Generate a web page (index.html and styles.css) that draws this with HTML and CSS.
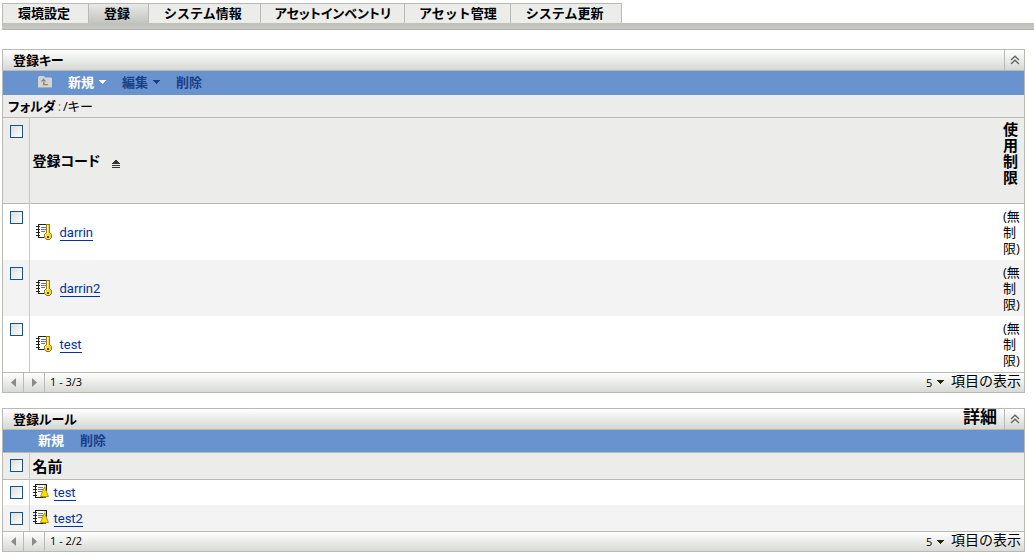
FILE: index.html
```
<!DOCTYPE html>
<html lang="ja">
<head>
<meta charset="utf-8">
<title>登録</title>
<link rel="stylesheet" href="styles.css">
</head>
<body>
<svg class="defs" aria-hidden="true">
  <symbol id="book" viewBox="0 0 16 16" shape-rendering="crispEdges">
    <path d="M3 1h10v12H3z" fill="#fff"/>
    <path d="M11 1h2v12h-2z" fill="#d0d0ca"/>
    <path d="M2 0h12v1H2zM2 0h1v14H2zM2 13h10v1H2zM13 1h1v6h-1z" fill="#222"/>
    <path d="M0 2h4v1H0zM0 5h4v1H0zM0 8h4v1H0zM0 11h4v1H0z" fill="#222"/>
    <path d="M5 3h5v1H5zM5 5h5v1H5zM5 7h4v1H5z" fill="#777"/>
  </symbol>
  <symbol id="key" viewBox="0 0 16 16">
    <use href="#book" width="16" height="16"/>
    <g shape-rendering="crispEdges">
      <path d="M10 0h4v9h1v1h1v4h-1v1h-1v1h-4v-1H9v-1H8v-4h1V9h1z" fill="#8d7930"/>
      <path d="M11 1h2v8h1v1h1v4h-1v1h-4v-1H9v-4h1V9h1z" fill="#f6d83e"/>
      <path d="M11 1h1v9h-1zM9 10h1v2H9z" fill="#fff3a0"/>
      <path d="M11 12h2v2h-2z" fill="#5d4e21"/>
    </g>
  </symbol>
  <symbol id="rule" viewBox="0 0 16 16">
    <use href="#book" width="16" height="16"/>
    <path d="M11.500 3 15.500 12.500H7.500z" fill="#ffe000" stroke="#b39600"/>
    <path d="M10 13h3v1h-3z" fill="#7d6600"/>
  </symbol>
  <symbol id="collapse" viewBox="0 0 10 10">
    <path d="M1 5 5 1.2 9 5M1 9 5 5.2 9 9" fill="none" stroke="#666" stroke-width="1.4"/>
  </symbol>
  <symbol id="down" viewBox="0 0 7 4" shape-rendering="crispEdges">
    <path d="M0 0h7v1H0zM1 1h5v1H1zM2 2h3v1H2zM3 3h1v1H3z" fill="currentColor"/>
  </symbol>
  <symbol id="left" viewBox="0 0 5 9"><path d="M5 0v9L0 4.5z" fill="currentColor"/></symbol>
  <symbol id="right" viewBox="0 0 5 9"><path d="M0 0v9l5-4.5z" fill="currentColor"/></symbol>
</svg>

<nav class="tabs">
  <a href="#" class="tab">環境設定</a>
  <a href="#" class="tab active" aria-current="page">登録</a>
  <a href="#" class="tab">システム情報</a>
  <a href="#" class="tab snug kana">アセットインベントリ</a>
  <a href="#" class="tab snug">アセット管理</a>
  <a href="#" class="tab">システム更新</a>
</nav>
<div class="tab-bar"></div>

<main>
  <section class="panel">
    <header class="panel-head">
      <h2>登録キー</h2>
      <button class="collapse" aria-label="折りたたむ"><svg width="10" height="10"><use href="#collapse"/></svg></button>
    </header>
    <div class="toolbar">
      <button class="tool up" aria-label="上へ" disabled>
        <svg width="14" height="12" viewBox="0 0 14 12">
          <path d="M0 2 1 0h5l1 1.5h6l1 1V11l-1 1H1l-1-1z" fill="#d4d4d4"/>
          <path d="M0 11h14l-1 1H1z" fill="#aaa"/>
          <path d="M3 5.500h5v-1H7v-1H6v-1H5v1H4v1H3zM5 5h1.500v3H10v1.200H5z" fill="#888"/>
        </svg>
      </button>
      <button class="tool">新規<svg width="7" height="4"><use href="#down"/></svg></button>
      <button class="tool" disabled>編集<svg width="7" height="4"><use href="#down"/></svg></button>
      <button class="tool" disabled>削除</button>
    </div>
    <div class="path"><b>フォルダ</b><span class="colon">:</span>/キー</div>
    <table class="grid keys">
      <thead>
        <tr>
          <th class="check"><input type="checkbox" aria-label="すべて選択"></th>
          <th class="name code">登録コード
            <svg class="sort" width="8" height="9" viewBox="0 0 8 9" shape-rendering="crispEdges"><path d="M3 0h2v1H3zM2 1h4v1H2zM1 2h6v1H1zM0 3h8v1H0zM0 5h8v1H0zM0 7h8v1H0z" fill="#333"/></svg></th>
          <th class="limit">使用制限</th>
        </tr>
      </thead>
      <tbody>
        <tr><td class="check"><input type="checkbox" aria-label="darrin"></td><td class="name"><div class="item"><svg width="16" height="16"><use href="#key"/></svg><a href="#">darrin</a></div></td><td class="limit">(無制限)</td></tr>
        <tr><td class="check"><input type="checkbox" aria-label="darrin2"></td><td class="name"><div class="item"><svg width="16" height="16"><use href="#key"/></svg><a href="#">darrin2</a></div></td><td class="limit">(無制限)</td></tr>
        <tr><td class="check"><input type="checkbox" aria-label="test"></td><td class="name"><div class="item"><svg width="16" height="16"><use href="#key"/></svg><a href="#">test</a></div></td><td class="limit">(無制限)</td></tr>
      </tbody>
    </table>
    <footer class="pager">
      <button aria-label="前へ"><svg width="5" height="9"><use href="#left"/></svg></button>
      <button aria-label="次へ"><svg width="5" height="9"><use href="#right"/></svg></button>
      <span class="range">1 - 3/3</span>
      <span class="size"><select id="keys-size"><option>5</option><option>10</option></select><svg width="7" height="4"><use href="#down"/></svg></span>
      <label for="keys-size">項目の表示</label>
    </footer>
  </section>

  <section class="panel">
    <header class="panel-head">
      <h2>登録ルール</h2>
      <a href="#" class="detail">詳細</a>
      <button class="collapse" aria-label="折りたたむ"><svg width="10" height="10"><use href="#collapse"/></svg></button>
    </header>
    <div class="toolbar short">
      <button class="tool">新規</button>
      <button class="tool" disabled>削除</button>
    </div>
    <table class="grid rules">
      <thead>
        <tr><th class="check"><input type="checkbox" aria-label="すべて選択"></th><th class="name">名前</th></tr>
      </thead>
      <tbody>
        <tr><td class="check"><input type="checkbox" aria-label="test"></td><td class="name"><div class="item"><svg width="16" height="16"><use href="#rule"/></svg><a href="#">test</a></div></td></tr>
        <tr><td class="check"><input type="checkbox" aria-label="test2"></td><td class="name"><div class="item"><svg width="16" height="16"><use href="#rule"/></svg><a href="#">test2</a></div></td></tr>
      </tbody>
    </table>
    <footer class="pager">
      <button aria-label="前へ"><svg width="5" height="9"><use href="#left"/></svg></button>
      <button aria-label="次へ"><svg width="5" height="9"><use href="#right"/></svg></button>
      <span class="range">1 - 2/2</span>
      <span class="size"><select id="rules-size"><option>5</option><option>10</option></select><svg width="7" height="4"><use href="#down"/></svg></span>
      <label for="rules-size">項目の表示</label>
    </footer>
  </section>
</main>
</body>
</html>
```
FILE: styles.css
```
* { box-sizing: border-box; }
body {
  margin: 0;
  padding: 3px 0 0 2px;
  background: #fff;
  color: #000;
  font: 13px/16px "Open Sans", "Noto Sans CJK JP", sans-serif;
}
button { margin: 0; padding: 0; border: 0; background: none; font: inherit; color: inherit; }
svg { display: block; flex: none; }
.defs { display: none; }

.tabs {
  display: flex;
  border-left: 1px solid #b9bab4;
  font-weight: 700;
}
.tab {
  height: 20px;
  padding: 0 18px 0 15px;
  border: 1px solid #b9bab4;
  border-width: 1px 1px 0 0;
  background: #ececea;
  color: #000;
  line-height: 18px;
  text-decoration: none;
  white-space: nowrap;
}
.tab.snug { padding: 0 13px 0 14px; }
.tab.kana { font-feature-settings: "palt"; }
.tab.active { background: linear-gradient(#e9e9e7, #c2c4be); }
.tab-bar {
  height: 7px;
  border-bottom: 1px solid #b0b1ab;
  background: linear-gradient(#bfc0ba, #c9cac5);
}

main {
  display: flex;
  flex-direction: column;
  gap: 15px;
  padding: 19px 9px 0 0;
}
.panel { border: 1px solid #b9bab4; }
.panel-head {
  display: flex;
  align-items: stretch;
  height: 21px;
  border-bottom: 1px solid #b9bab4;
  background: linear-gradient(#fff, #d5d8d3);
}
.panel-head h2 {
  flex: 1;
  margin: 0;
  padding: 1px 0 0 10px;
  font-size: 13px;
  line-height: 18px;
  font-feature-settings: "palt";
}
.detail {
  padding-right: 7px;
  color: #000;
  font-size: 17px;
  font-weight: 700;
  line-height: 16px;
  text-decoration: none;
}
.collapse {
  display: flex;
  align-items: center;
  justify-content: center;
  width: 20px;
  border-left: 1px solid #b9bab4;
}

.toolbar {
  display: flex;
  align-items: center;
  gap: 16px;
  height: 24px;
  padding: 0 0 2px 35px;
  background: #6993cf;
  color: #fff;
  font-weight: 700;
}
.toolbar.short { height: 22px; }
.tool { display: flex; align-items: center; gap: 5px; }
.tool:disabled { color: #194086; }
.path {
  height: 22px;
  padding: 3px 5px;
  background: #ececea;
  font-feature-settings: "palt";
}
.colon { padding: 0 2px; color: #777; }

.grid { width: 100%; border-collapse: collapse; table-layout: fixed; }
.grid th, .grid td { padding: 0; font-weight: 400; text-align: left; vertical-align: middle; }
.grid thead tr {
  background: #ececea;
  border-top: 1px solid #b9bab4;
  border-bottom: 1px solid #b9bab4;
}
.grid tbody tr:nth-child(even) { background: #f3f3f3; }
.grid .check { width: 26px; border-right: 1px solid #c9c9c5; }
.grid th.name { padding-left: 3px; font-size: 15px; font-weight: 700; }
.grid th.code { font-size: 14px; font-feature-settings: "palt"; }
.keys .check { padding-top: 7px; vertical-align: top; }
.keys thead tr { height: 86px; }
.keys tbody tr { height: 56px; }
.rules tr { height: 26px; }
.rules thead tr { height: 27px; }
.keys .limit { width: 21px; }
.keys td.limit { line-height: 16px; }
.keys th.limit {
  padding: 3px 4px 0 0;
  font-size: 15px;
  font-weight: 700;
  line-height: 16px;
  vertical-align: top;
  word-break: break-all;
}
.sort { display: inline-block; margin-left: 8px; vertical-align: -3px; }
.item { display: flex; align-items: center; gap: 8px; padding-left: 6px; }
.rules .item { gap: 5px; padding-left: 3px; }
.item a {
  margin-top: 3px;
  border-bottom: 1px solid #0033a0;
  color: #0033a0;
  font-family: Roboto, sans-serif;
  line-height: 14px;
  text-decoration: none;
}
input[type="checkbox"] {
  display: block;
  appearance: none;
  width: 13px;
  height: 13px;
  margin: 0 0 0 7px;
  border: 1px solid #1c5180;
  background: linear-gradient(135deg, #dcdcd7, #fff);
}

.pager {
  display: flex;
  align-items: stretch;
  height: 20px;
  border-top: 1px solid #b9bab4;
  background: linear-gradient(#fff, #d8dad6);
  line-height: 18px;
}
.pager button {
  display: flex;
  align-items: center;
  justify-content: center;
  width: 21px;
  border-right: 1px solid #b9bab4;
  color: #8b8d8b;
}
.range { flex: 1; padding-left: 5px; font-size: 11px; }
.size { display: flex; align-items: center; gap: 4px; padding-right: 7px; color: #222800; }
.size select {
  appearance: none;
  width: 7px;
  padding: 0;
  border: 0;
  background: none;
  color: #000;
  font: 11px "Open Sans", sans-serif;
}
.pager label { padding-right: 3px; font-size: 14px; line-height: 16px; }
```
